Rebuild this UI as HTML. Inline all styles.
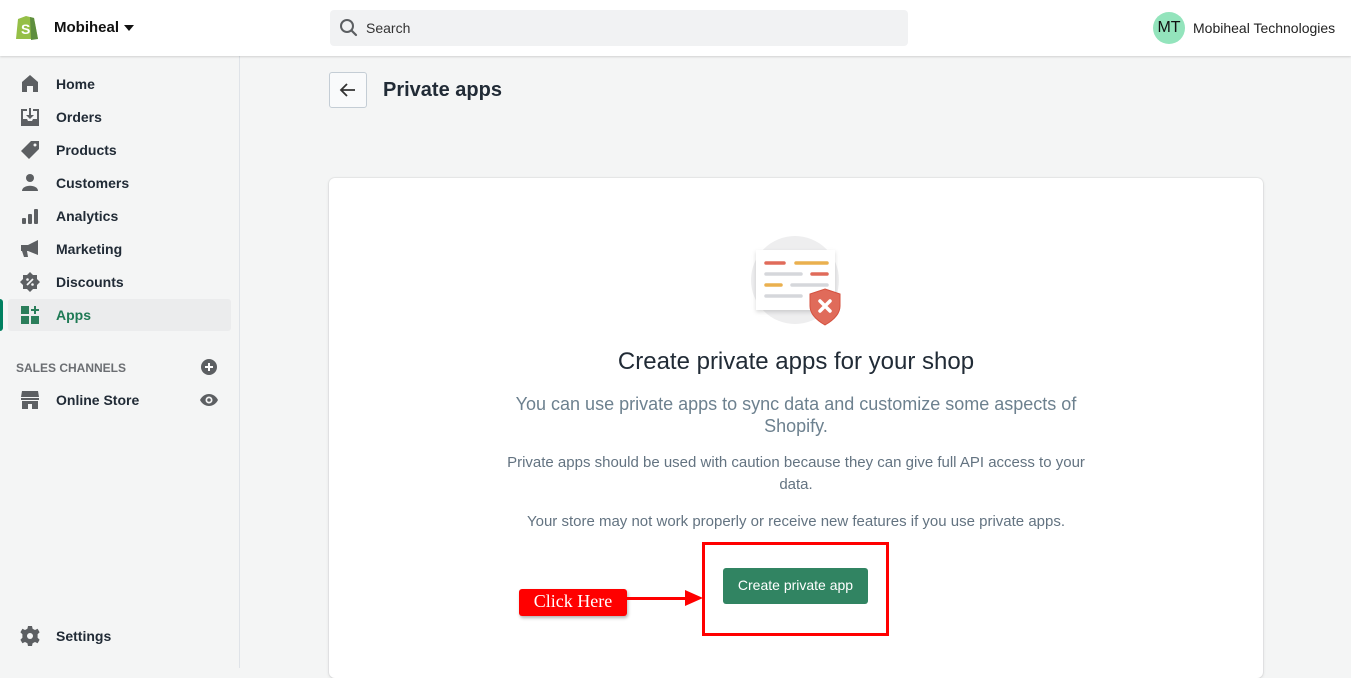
<!DOCTYPE html>
<html><head><style>
*{box-sizing:border-box;margin:0;padding:0}
body{width:1351px;height:668px;overflow:hidden;background:#f4f5f5;font-family:"Liberation Sans",sans-serif;color:#212b36;position:relative}
.top{position:absolute;left:0;top:0;width:1351px;height:56px;background:#fff;box-shadow:0 1px 2px rgba(0,0,0,.15);z-index:2}
.side{position:absolute;left:0;top:56px;width:240px;height:612px;border-right:1px solid #dfe3e8;background:#f4f5f5}
.nav{position:absolute;left:0;height:32px;width:240px;font-size:14px;font-weight:bold;color:#212b36;display:flex;align-items:center}
.nav svg{position:absolute;left:20px}
.nav span{position:absolute;left:56px}
.ic{fill:#5c5f62}
</style></head><body>
<div class="top">
<svg style="position:absolute;left:14px;top:13px" width="26" height="28" viewBox="0 0 26 28"><path d="M4 6 L12 3 L20 5 L24 26 L2 26 Z" fill="#95bf47"/><path d="M16 4 L20 5 L24 26 L17 27 Z" fill="#5e8e3e"/><text x="7" y="21" font-size="14" font-weight="bold" fill="#fff" font-family="Liberation Sans">S</text></svg>
<div style="position:absolute;left:54px;top:19px;font-size:15px;font-weight:bold;color:#111">Mobiheal</div>
<div style="position:absolute;left:124px;top:25px;width:0;height:0;border-left:5px solid transparent;border-right:5px solid transparent;border-top:6px solid #111;margin-left:0"></div>
<div style="position:absolute;left:330px;top:10px;width:578px;height:36px;background:#f1f2f3;border-radius:4px"></div>
<svg style="position:absolute;left:339px;top:18px" width="20" height="20" viewBox="0 0 20 20"><circle cx="8" cy="8" r="6" fill="none" stroke="#5c5f62" stroke-width="2"/><path d="M12.5 12.5 L17 17" stroke="#5c5f62" stroke-width="2.2" stroke-linecap="round"/></svg>
<div style="position:absolute;left:366px;top:20px;font-size:14px;color:#333">Search</div>
<div style="position:absolute;left:1153px;top:12px;width:32px;height:32px;border-radius:50%;background:#93e4bc;font-size:16px;color:#111;text-align:center;line-height:32px">MT</div>
<div style="position:absolute;left:1193px;top:20px;font-size:14px;color:#222">Mobiheal Technologies</div>
</div>
<div class="side">
<div class="nav" style="top:12px"><svg width="20" height="20" viewBox="0 0 20 20"><path class="ic" d="M2 8 L10 1 L18 8 V18 H13 V12 H7 V18 H2 Z"/></svg><span>Home</span></div>
<div class="nav" style="top:45px"><svg width="20" height="20" viewBox="0 0 20 20"><path class="ic" d="M1 2 H7 V4 H3 V12 H7 L8 14 H12 L13 12 H17 V4 H13 V2 H19 V19 H1 Z M9 1 H11 V8 H14 L10 12 L6 8 H9 Z"/></svg><span>Orders</span></div>
<div class="nav" style="top:78px"><svg width="20" height="20" viewBox="0 0 20 20"><path class="ic" d="M11 1 H19 V9 L9 19 L1 11 Z"/><circle cx="15" cy="5" r="1.5" fill="#f4f5f5"/></svg><span>Products</span></div>
<div class="nav" style="top:111px"><svg width="20" height="20" viewBox="0 0 20 20"><circle class="ic" cx="10" cy="5" r="4"/><path class="ic" d="M2 18 C2 11 18 11 18 18 Z"/></svg><span>Customers</span></div>
<div class="nav" style="top:144px"><svg width="20" height="20" viewBox="0 0 20 20"><rect class="ic" x="2" y="12" width="4" height="6" rx="1"/><rect class="ic" x="8" y="8" width="4" height="10" rx="1"/><rect class="ic" x="14" y="3" width="4" height="15" rx="1"/></svg><span>Analytics</span></div>
<div class="nav" style="top:177px"><svg width="20" height="20" viewBox="0 0 20 20"><path class="ic" d="M1 6 H8 L18 1 V16 L8 12 H7 L8 18 H4 L2 12 H1 Z"/></svg><span>Marketing</span></div>
<div class="nav" style="top:210px"><svg width="20" height="20" viewBox="0 0 20 20"><path class="ic" d="M10 0 L13 3 H17 V7 L20 10 L17 13 V17 H13 L10 20 L7 17 H3 V13 L0 10 L3 7 V3 H7 Z"/><path d="M7 13 L13 7" stroke="#f4f5f5" stroke-width="1.8"/><circle cx="7.5" cy="7.5" r="1.3" fill="#f4f5f5"/><circle cx="12.5" cy="12.5" r="1.3" fill="#f4f5f5"/></svg><span>Discounts</span></div>
<div style="position:absolute;left:8px;top:243px;width:223px;height:32px;background:#ebeced;border-radius:3px"></div>
<div style="position:absolute;left:0;top:243px;width:3px;height:32px;background:#008060;border-radius:0 3px 3px 0"></div>
<div class="nav" style="top:243px;color:#1f7a55"><svg width="20" height="20" viewBox="0 0 20 20" fill="#2a7d5a"><rect x="1" y="1" width="8" height="8"/><rect x="1" y="11" width="8" height="8"/><rect x="11" y="11" width="8" height="8"/><path d="M14 1 H16 V4 H19 V6 H16 V9 H14 V6 H11 V4 H14 Z"/></svg><span>Apps</span></div>
<div style="position:absolute;left:16px;top:305px;font-size:12px;font-weight:bold;color:#6b6e72">SALES CHANNELS</div>
<svg style="position:absolute;left:200px;top:302px" width="18" height="18" viewBox="0 0 18 18"><circle class="ic" cx="9" cy="9" r="8"/><path d="M9 5 V13 M5 9 H13" stroke="#fff" stroke-width="2"/></svg>
<div class="nav" style="top:328px"><svg width="20" height="20" viewBox="0 0 20 20"><path class="ic" d="M2 1 H18 L19 7 H1 Z M1 8 H19 V10 H1 Z M2 11 H18 V19 H12 V14 H8 V19 H2 Z"/></svg><span>Online Store</span></div>
<svg style="position:absolute;left:200px;top:337px" width="18" height="14" viewBox="0 0 18 14"><path class="ic" d="M0 7 C4 -1 14 -1 18 7 C14 15 4 15 0 7 Z"/><circle cx="9" cy="7" r="3.5" fill="#f4f5f5"/><circle class="ic" cx="9" cy="7" r="1.8"/></svg>
<div class="nav" style="top:564px"><svg width="20" height="20" viewBox="0 0 20 20"><path class="ic" d="M8 0 H12 L12.6 2.8 L15 4 L17.6 2.8 L19.6 6.2 L17.6 8.2 V11.8 L19.6 13.8 L17.6 17.2 L15 16 L12.6 17.2 L12 20 H8 L7.4 17.2 L5 16 L2.4 17.2 L0.4 13.8 L2.4 11.8 V8.2 L0.4 6.2 L2.4 2.8 L5 4 L7.4 2.8 Z"/><circle cx="10" cy="10" r="3" fill="#f4f5f5"/></svg><span>Settings</span></div>
</div>
<div style="position:absolute;left:329px;top:72px;width:38px;height:36px;border:1px solid #c4cdd5;border-radius:3px;background:#f9fafb"></div>
<svg style="position:absolute;left:339px;top:81px" width="18" height="18" viewBox="0 0 18 18"><path d="M16 9 H2 M8 3 L2 9 L8 15" fill="none" stroke="#333" stroke-width="1.8"/></svg>
<div style="position:absolute;left:383px;top:79px;font-size:20px;font-weight:bold;color:#212b36">Private apps</div>
<div style="position:absolute;left:329px;top:178px;width:934px;height:500px;background:#fff;border-radius:6px;box-shadow:0 0 0 1px rgba(63,63,68,.05),0 1px 3px rgba(63,63,68,.15)"></div>
<svg style="position:absolute;left:745px;top:230px" width="105" height="100" viewBox="0 0 105 100">
<circle cx="50" cy="50" r="44" fill="#eeeeef"/>
<rect x="11" y="20" width="79" height="60" fill="#fff" style="filter:drop-shadow(0 2px 2px rgba(0,0,0,.15))"/>
<g stroke-width="3.5" stroke-linecap="round"><path d="M21 33 H39" stroke="#e06b5a"/><path d="M51 33 H82" stroke="#eab04f"/><path d="M21 44 H56" stroke="#d5d7db"/><path d="M67 44 H82" stroke="#e06b5a"/><path d="M21 55 H36" stroke="#eab04f"/><path d="M47 55 H82" stroke="#d5d7db"/><path d="M21 66 H56" stroke="#d5d7db"/></g>
<path d="M80 59 L95 64 V76 C95 85 87 91 80 95 C73 91 65 85 65 76 V64 Z" fill="#e06b5a" stroke="#d4513f"/>
<path d="M75 71 L85 81 M85 71 L75 81" stroke="#fff" stroke-width="3.5" stroke-linecap="round"/>
</svg>
<div style="position:absolute;left:329px;top:348px;width:934px;text-align:center;font-size:24px;color:#212b36">Create private apps for your shop</div>
<div style="position:absolute;left:500px;top:393px;width:592px;text-align:center;font-size:18px;line-height:22px;color:#6d818f">You can use private apps to sync data and customize some aspects of Shopify.</div>
<div style="position:absolute;left:500px;top:452px;width:592px;text-align:center;font-size:15px;line-height:22px;color:#637381">Private apps should be used with caution because they can give full API access to your data.</div>
<div style="position:absolute;left:329px;top:513px;width:934px;text-align:center;font-size:15px;color:#637381">Your store may not work properly or receive new features if you use private apps.</div>
<div style="position:absolute;left:702px;top:542px;width:187px;height:94px;border:3px solid #f00"></div>
<div style="position:absolute;left:723px;top:568px;width:145px;height:36px;background:#318462;border-radius:3px;color:#fff;font-size:14px;text-align:center;line-height:34px">Create private app</div>
<div style="position:absolute;left:519px;top:589px;width:108px;height:27px;background:#f00;border-radius:3px;box-shadow:1px 2px 3px rgba(0,0,0,.3);color:#fff;font-family:'Liberation Serif',serif;font-size:18px;text-align:center;line-height:25px">Click Here</div>
<div style="position:absolute;left:627px;top:597px;width:60px;height:3px;background:#f00"></div>
<div style="position:absolute;left:685px;top:590px;width:0;height:0;border-top:8px solid transparent;border-bottom:8px solid transparent;border-left:18px solid #f00"></div>
</body></html>
